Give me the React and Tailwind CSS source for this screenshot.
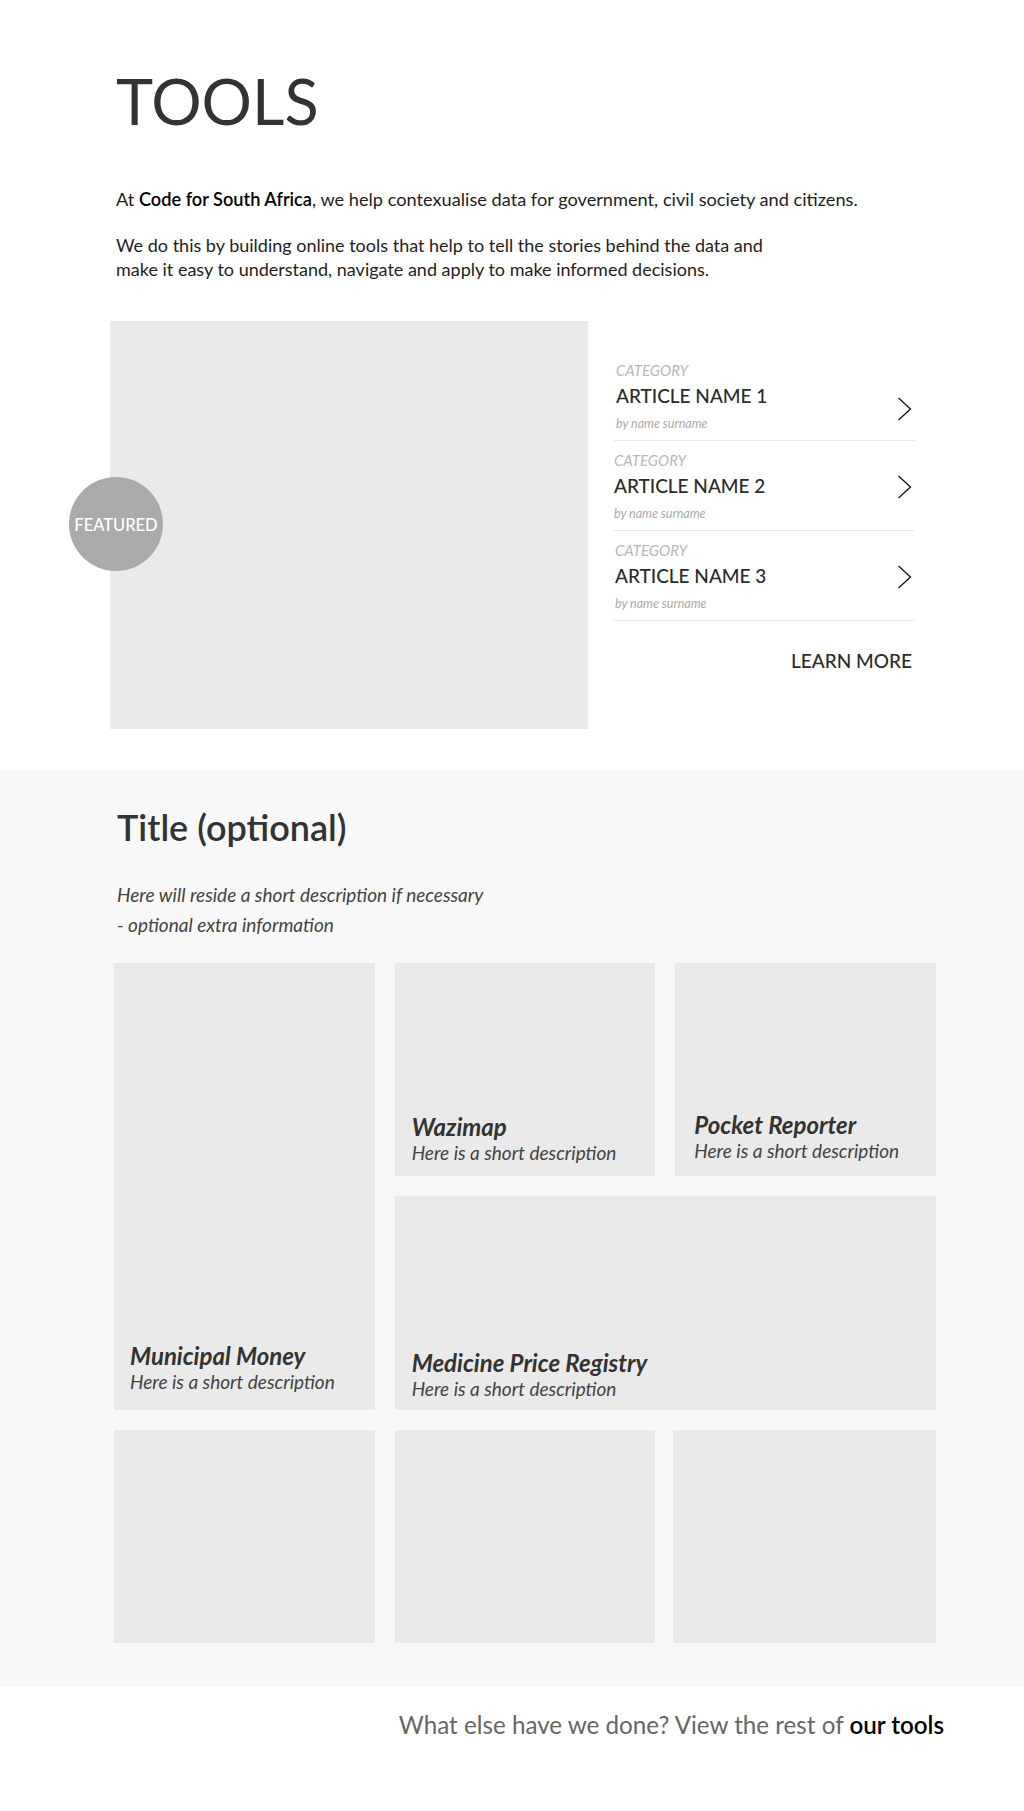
import React from "react";

const articles = [
  { name: "ARTICLE NAME 1", chevronShift: "pt-[36px]", indent: "pl-[2px]" },
  { name: "ARTICLE NAME 2", chevronShift: "pt-[24px]", indent: "pl-0" },
  { name: "ARTICLE NAME 3", chevronShift: "pt-[24px]", indent: "pl-[1px]" },
];

function Chevron() {
  return (
    <svg width="15" height="24" viewBox="0 0 15 24" fill="none">
      <polyline points="1.5,1 13.5,12 1.5,23" stroke="#111" strokeWidth="1.3" />
    </svg>
  );
}

function ArticleRow({ name, chevronShift, indent }) {
  return (
    <div className={`flex items-start justify-between border-b border-[#e6e6e6] pt-[10px] pb-[9px] ${indent}`}>
      <div className="flex flex-col">
        <span className="text-[15px] leading-[18px] italic text-[#b8b8b8]">CATEGORY</span>
        <span className="mt-[6px] text-[19px] leading-[22px] font-medium text-[#2b2b2b]">{name}</span>
        <span className="mt-[10px] text-[12.5px] leading-[14px] italic text-[#aaaaaa]">by name surname</span>
      </div>
      <div className={`pr-[3px] ${chevronShift}`}>
        <Chevron />
      </div>
    </div>
  );
}

function ToolCard({ title, pad, className }) {
  return (
    <div className={`flex flex-col justify-end bg-[#eaeaea] ${pad} ${className}`}>
      {title && (
        <>
          <span className="text-[24px] leading-[28px] italic font-bold text-[#333]">{title}</span>
          <span className="text-[19px] leading-[24px] italic text-[#444]">Here is a short description</span>
        </>
      )}
    </div>
  );
}

export default function App() {
  return (
    <div className="min-h-[1811px] bg-white font-['Lato','Open_Sans',sans-serif] text-[#1e1e1e]">
      <section className="pb-[41px]">
        <div className="pl-[116px] pt-[70px]">
          <h1 className="text-[63px] leading-[62px] text-[#333]">TOOLS</h1>
          <p className="mt-[55px] text-[18.2px] leading-[24px]">
            At <span className="font-semibold text-black">Code for South Africa</span>, we help contexualise data for government, civil society and citizens.
          </p>
          <p className="mt-[22px] text-[18px] leading-[24px]">
            We do this by building online tools that help to tell the stories behind the data and
            <br />
            make it easy to understand, navigate and apply to make informed decisions.
          </p>
        </div>

        <div className="mt-[40px] flex pl-[110px]">
          <div className="relative h-[408px] w-[478px] bg-[#eaeaea]">
            <div className="absolute left-[-41px] top-[156px] flex h-[94px] w-[94px] items-center justify-center rounded-full bg-[#aaaaaa]">
              <span className="mt-[2px] text-[16.5px] font-medium text-white">FEATURED</span>
            </div>
          </div>
          <div className="ml-[26px] w-[301px] pt-[30px]">
            {articles.map((a) => (
              <ArticleRow key={a.name} {...a} />
            ))}
            <div className="mt-[29px] pr-[3px] text-right text-[19px] leading-[22px] font-medium text-[#2b2b2b]">LEARN MORE</div>
          </div>
        </div>
      </section>

      <section className="bg-[#f8f8f8] pt-[35px] pb-[44px]">
        <div className="pl-[117px]">
          <h2 className="text-[36px] leading-[44px] font-semibold text-[#333]">Title (optional)</h2>
          <p className="mt-[31px] text-[19px] leading-[30px] italic text-[#444]">
            Here will reside a short description if necessary
            <br />- optional extra information
          </p>
        </div>

        <div className="mt-[23px] ml-[114px] grid w-[822px] grid-cols-3 grid-rows-[213px_214px_213px] gap-x-[20px] gap-y-[20px]">
          <ToolCard title="Municipal Money" pad="pl-[16px] pb-[16px]" className="row-span-2" />
          <ToolCard title="Wazimap" pad="pl-[17px] pb-[11px]" />
          <ToolCard title="Pocket Reporter" pad="pl-[19px] pb-[13px]" />
          <ToolCard title="Medicine Price Registry" pad="pl-[17px] pb-[9px]" className="col-span-2" />
          <ToolCard />
          <ToolCard />
          <ToolCard className="-ml-[2px]" />
        </div>
      </section>

      <footer className="flex justify-end pr-[80px] pt-[22px]">
        <p className="text-[24.2px] leading-[32px] text-[#666]">
          What else have we done? View the rest of <span className="font-semibold text-black">our tools</span>
        </p>
      </footer>
    </div>
  );
}
